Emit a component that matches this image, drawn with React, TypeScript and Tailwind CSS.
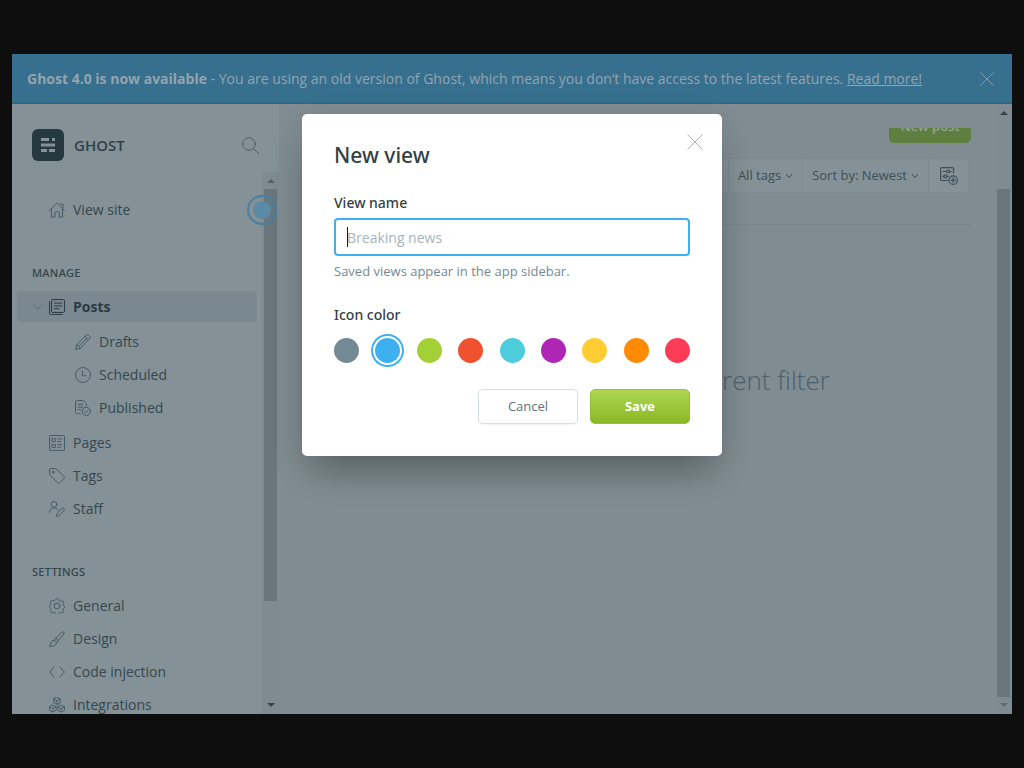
import { useState, type ReactNode } from "react";

function Icon({ children, className = "size-4" }: { children: ReactNode; className?: string }) {
  return (
    <svg
      viewBox="0 0 24 24"
      fill="none"
      stroke="currentColor"
      strokeWidth="1.5"
      strokeLinecap="round"
      strokeLinejoin="round"
      aria-hidden="true"
      className={`${className} shrink-0`}
    >
      {children}
    </svg>
  );
}

const cube = (x: number, y: number) =>
  `M${x} ${y - 5.2}l4.9 2.2v5.6l-4.9 2.6l-4.9-2.6v-5.6zM${x - 4.6} ${y - 2.6}l4.6 2.2l4.6-2.2M${x} ${y - 0.4}v5`;

const icons = {
  home: (
    <Icon>
      <path d="M.8 13 12 1.6 23.2 13M17 3.2h4v5.6M3.7 10.5v12.2h5v-6.2c0-1.2 1-2 2.2-2h2.2c1.2 0 2.2.8 2.2 2v6.2h5V10.5" />
    </Icon>
  ),
  posts: (
    <Icon>
      <rect x="3.8" y=".8" width="19.4" height="19.4" rx="1.5" />
      <path d="M.8 4v17.7c0 .8.7 1.5 1.5 1.5H20M8 6.2h11M8 10.4h11M8 14.6h7" />
    </Icon>
  ),
  pencil: (
    <Icon>
      <path d="M1 23l1.6-7L17.4 1.4c1.8-1.6 6.6 3.2 5 5L8 21.3zM2.6 16l5.4 5.3M15 3.8l5 5M17.6 6.4 5.3 18.7" />
    </Icon>
  ),
  clock: (
    <Icon>
      <circle cx="12" cy="12" r="11.2" />
      <path d="M11.2 6v7h5.2" />
    </Icon>
  ),
  published: (
    <Icon>
      <path d="M8 20.5H2.3A1.5 1.5 0 0 1 .8 19V2.3C.8 1.5 1.5.8 2.3.8h10.5l4.5 4.5v3M4.8 6.5h7M4.8 10.5h7M4.8 14.5h4" />
      <circle cx="17" cy="17" r="6.2" />
      <path d="m14.2 17.2 2 2 3.6-4" />
    </Icon>
  ),
  pages: (
    <Icon>
      <rect x=".8" y=".8" width="22.4" height="22.4" rx="1.2" />
      <path d="M5 5.5h4.5V10H5zM5 14.2h4.5v4.5H5zM13 5.8h6M13 9.8h4.5M13 14.5h6M13 18.5h4.5" />
    </Icon>
  ),
  tag: (
    <Icon>
      <path d="M.8 2.3v6.5c0 .7.2 1.2.7 1.7l11.800 12c.7.7 1.7.7 2.4 0l7-7c.7-.7.7-1.700 0-2.400l-11.500-11.600c-.5-.5-1-.7-1.700-.7H2.300C1.500.8.8 1.500.8 2.300z" />
      <circle cx="6.2" cy="6.2" r="1.5" />
    </Icon>
  ),
  staff: (
    <Icon>
      <circle cx="7.5" cy="5.2" r="4.4" />
      <path d="M.8 17.5v-.8c0-6 8.700-9.200 12.400-3.500M11 23.200l1.200-4.700 7.600-7.400c1.700-1.500 4.500 1.200 3 3l-7.500 7.700z" />
    </Icon>
  ),
  gear: (
    <Icon>
      <circle cx="12" cy="12" r="4.3" />
      <path d="M9.700 2.300c.9-2 3.700-2 4.600 0l.6 1.500c.4.900 1.300 1.400 2.300 1.100l1.500-.5c2-.8 4 1.200 3.200 3.200l-.6 1.600c-.3.900.2 1.900 1.100 2.200l-.1 0c1.300.6 1.300 3.600 0 4.200l-.3.100c-.9.400-1.300 1.300-1 2.200l.5 1.200c.8 2-1.200 4-3.200 3.200l-1.400-.6c-.9-.3-1.800.100-2.200 1l-.4.900c-.9 2-3.700 2-4.600 0l-.5-1.200c-.4-.9-1.300-1.300-2.200-1l-1.500.6c-2 .8-4-1.200-3.200-3.200l.6-1.500c.3-.9-.1-1.800-1-2.200l-.5-.2c-1.300-.6-1.300-3.500 0-4.100l.5-.2c.9-.4 1.300-1.300 1-2.200l-.6-1.500c-.8-2 1.200-4 3.200-3.200l1.500.6c.9.300 1.800-.100 2.200-1z" />
    </Icon>
  ),
  brush: (
    <Icon>
      <path d="M7.200 14.200 19.300 1.700c2-1.900 4.600.6 3 2.900L11.200 17.800M7.200 14.200c2.300.3 3.900 1.700 4 3.700.1 3.300-4.500 5.200-10.400 5 2-1.500 1.200-4.300 2.300-6.400.8-1.600 2.300-2.400 4.100-2.300zM10.300 11l3.800 3.300" />
    </Icon>
  ),
  code: (
    <Icon>
      <path d="M7.500 4.500.8 12l6.700 7.500M16.500 4.500l6.700 7.500-6.700 7.500" />
    </Icon>
  ),
  integrations: (
    <Icon>
      <path d={cube(12, 6)} />
      <path d={cube(5.8, 17.5)} />
      <path d={cube(18.2, 17.5)} />
    </Icon>
  ),
};

function NavRow({ icon, label, nested = false }: { icon: ReactNode; label: string; nested?: boolean }) {
  return (
    <a
      href="#"
      className={`flex h-[33px] shrink-0 items-center gap-2 text-sm text-[#36474f] ${nested ? "pl-[63px]" : "pl-[37px]"}`}
    >
      <span className="text-[#465c65]">{icon}</span>
      {label}
    </a>
  );
}

function SectionTitle({ children }: { children: ReactNode }) {
  return (
    <h2 className="mt-[39px] mb-[9px] shrink-0 pl-5 font-['Noto_Sans',sans-serif] text-[11px] leading-4 font-medium tracking-wide text-[#33454d]">
      {children}
    </h2>
  );
}

function Arrow({ up = false, className }: { up?: boolean; className: string }) {
  return (
    <svg viewBox="0 0 8 4" className={`h-1 w-2 shrink-0 ${className}`} aria-hidden="true">
      <path d={up ? "M0 4 4 0l4 4z" : "M0 0h8L4 4z"} fill="currentColor" />
    </svg>
  );
}

function Chevron() {
  return (
    <svg viewBox="0 0 8 6" className="h-1.5 w-2" fill="none" stroke="currentColor" aria-hidden="true">
      <path d="M1 1l3 3.5L7 1" />
    </svg>
  );
}

function Cross({ className }: { className: string }) {
  return (
    <svg viewBox="0 0 16 16" className={className} fill="none" stroke="currentColor" aria-hidden="true">
      <path d="M.5.5l15 15M15.5.5l-15 15" />
    </svg>
  );
}

function Banner() {
  return (
    <header className="flex h-[50px] shrink-0 items-center justify-between border-b border-[#28658c] bg-[#376f8f] pr-[18px] pl-[15px] text-sm text-[#94a4ac]">
      <p className="whitespace-nowrap">
        <strong className="font-bold">Ghost 4.0 is now available</strong> - You are using an old version of Ghost, which
        means you don’t have access to the latest features.{" "}
        <a href="#" className="underline">
          Read more!
        </a>
      </p>
      <button type="button" aria-label="Dismiss">
        <Cross className="size-3.5" />
      </button>
    </header>
  );
}

function Sidebar() {
  return (
    <aside className="flex w-[267px] shrink-0 flex-col bg-[#849196]">
      <div className="flex h-[68px] shrink-0 items-center gap-2.5 pt-3.5 pr-5 pl-5">
        <svg viewBox="0 0 32 32" className="size-8" aria-hidden="true">
          <rect width="32" height="32" rx="6" fill="#263840" />
          <path d="M9 9h8v3H9zM20 9h3v3h-3zM9 14.5h14v3H9zM9 20h6v3H9zM17 20h6v3h-6z" fill="#849196" />
        </svg>
        <span className="flex-1 text-[15px] leading-5 font-semibold text-[#2f424b]">GHOST</span>
        <button type="button" aria-label="Search" className="text-[#485d66]">
          <svg viewBox="0 0 17 17" className="size-[17px]" fill="none" stroke="currentColor" strokeLinecap="round">
            <circle cx="7" cy="7" r="6.3" />
            <path d="m11.5 11.5 5 5" />
          </svg>
        </button>
      </div>
      <div className="relative flex min-h-0 flex-1">
        <nav className="flex min-w-0 flex-1 flex-col overflow-hidden pt-[21px]">
          <NavRow icon={icons.home} label="View site" />
          <SectionTitle>MANAGE</SectionTitle>
          <a
            href="#"
            className="mx-[5px] my-px flex h-[31px] shrink-0 items-center rounded bg-[#7a8891] pl-4 text-sm font-bold text-[#2b3b43]"
          >
            <svg viewBox="0 0 10 6" className="mr-1.5 h-1.5 w-2.5 text-[#566a73]" fill="none" stroke="currentColor">
              <path d="M.5.5 5 5 9.5.5" />
            </svg>
            <span className="mr-2">{icons.posts}</span>
            Posts
          </a>
          <div className="my-0.5 shrink-0">
            <NavRow nested icon={icons.pencil} label="Drafts" />
            <NavRow nested icon={icons.clock} label="Scheduled" />
            <NavRow nested icon={icons.published} label="Published" />
          </div>
          <NavRow icon={icons.pages} label="Pages" />
          <NavRow icon={icons.tag} label="Tags" />
          <NavRow icon={icons.staff} label="Staff" />
          <SectionTitle>SETTINGS</SectionTitle>
          <NavRow icon={icons.gear} label="General" />
          <NavRow icon={icons.brush} label="Design" />
          <NavRow icon={icons.code} label="Code injection" />
          <NavRow icon={icons.integrations} label="Integrations" />
        </nav>
        <div className="flex w-[17px] flex-col items-center bg-[#7e8b90] py-[7px]">
          <Arrow up className="text-[#566368]" />
          <div className="mt-1.5 mb-auto h-[412px] w-[13px] bg-[#69777c]" />
          <Arrow className="text-[#34444c]" />
        </div>
        <span className="absolute top-[23px] right-0.5 flex size-[30px] items-center justify-center rounded-full border-2 border-[#4580a0]">
          <span className="size-[18px] rounded-full bg-[#5a8aa5]" />
        </span>
      </div>
    </aside>
  );
}

function Posts() {
  return (
    <main className="flex min-w-0 flex-1 bg-[#7f8c91]">
      <div className="mt-6 min-w-0 flex-1 overflow-hidden pr-6 pl-7">
        <div className="-mt-5 flex justify-end">
          <button
            type="button"
            className="h-[35px] w-[82px] rounded-[5px] bg-[#5f7f40] pt-0.5 text-[13px] font-semibold text-[#94a396]"
          >
            New post
          </button>
        </div>
        <div className="mt-[15px] mr-0.5 flex h-[35px] justify-end divide-x divide-[#7c898e] rounded border border-[#7c898e] bg-[#849196] text-[13px] text-[#3c4f58]">
          <span />
          <button type="button" className="flex items-center gap-1 px-[9px]">
            All tags <Chevron />
          </button>
          <button type="button" className="flex items-center gap-1 px-[9px]">
            Sort by: Newest <Chevron />
          </button>
          <button type="button" aria-label="Save view" className="flex w-[39px] items-center justify-center">
            <Icon className="size-[18px]">
              <path d="M10 18H2.3A1.5 1.5 0 0 1 .8 16.5V2.300C.8 1.500 1.500.8 2.300.8h14.200c.8 0 1.500.7 1.500 1.500V8M4 6h5M13 6h2M4 12.500h1M9 12.500h2" />
              <circle cx="11" cy="6" r="2" />
              <circle cx="7" cy="12.5" r="2" />
              <circle cx="17.5" cy="17.5" r="5.7" />
              <path d="M17.5 14.500v6M14.500 17.500h6" />
            </Icon>
          </button>
        </div>
        <div className="h-8 border-b border-[#77858b]" />
        <p className="mt-[137px] text-center text-[26px] leading-9 font-light whitespace-nowrap text-[#4c616b]">
          No posts match the current filter
        </p>
      </div>
      <div className="flex w-[17px] shrink-0 flex-col items-center bg-[#7e8b90] py-[7px]">
        <Arrow up className="text-[#34444c]" />
        <div className="mt-[74px] mb-1.5 w-[13px] flex-1 bg-[#69777c]" />
        <Arrow className="text-[#5e6c72]" />
      </div>
    </main>
  );
}

const colors = [
  { name: "midgrey", style: "bg-[#738a94]" },
  { name: "blue", style: "bg-[#3eb0ef]" },
  { name: "green", style: "bg-[#a4d037]" },
  { name: "red", style: "bg-[#f05230]" },
  { name: "teal", style: "bg-[#4dcddc]" },
  { name: "purple", style: "bg-[#ad26b4]" },
  { name: "yellow", style: "bg-[#ffcc33]" },
  { name: "orange", style: "bg-[#ff8b05]" },
  { name: "pink", style: "bg-[#fe3c57]" },
];

const labelStyle = "font-['Noto_Sans',sans-serif] text-sm leading-5 font-medium text-[#343f44]";

function NewViewDialog() {
  const [color, setColor] = useState("blue");
  const [name, setName] = useState("");
  return (
    <form
      role="dialog"
      aria-labelledby="dialog-title"
      className="w-[420px] rounded-[5px] bg-white pb-8 shadow-[0_22px_36px_-10px_rgba(0,0,0,0.3),0_6px_36px_rgba(0,0,0,0.06)]"
    >
      <div className="flex items-start justify-between pt-5 pr-[19px] pl-8">
        <h1
          id="dialog-title"
          className="mt-1.5 font-['Noto_Sans',sans-serif] text-[21px] leading-[30px] font-medium text-[#343f44]"
        >
          New view
        </h1>
        <button type="button" aria-label="Close" className="text-[#aeb2b4]">
          <Cross className="size-4" />
        </button>
      </div>
      <div className="px-8">
        <label htmlFor="view-name" className={`mt-[23px] block ${labelStyle}`}>
          View name
        </label>
        <div className="relative mt-[5px]">
          <input
            id="view-name"
            type="text"
            value={name}
            onChange={(e) => setName(e.target.value)}
            placeholder="Breaking news"
            className="block h-[38px] w-full rounded border-2 border-[#3eb0ef] px-[11px] text-sm text-[#15171a] caret-transparent outline-none placeholder:text-[#a6b4bb]"
          />
          <span className="absolute top-[9px] left-[13px] h-5 w-px bg-[#15171a]" />
        </div>
        <p className="mt-[5px] text-[13px] leading-5 text-[#738a94]">Saved views appear in the app sidebar.</p>
        <fieldset className="mt-6">
          <legend className={labelStyle}>Icon color</legend>
          <div className="mt-[13px] flex justify-between">
            {colors.map((c) => (
              <input
                key={c.name}
                type="radio"
                name="color"
                aria-label={c.name}
                checked={color === c.name}
                onChange={() => setColor(c.name)}
                className={`size-[25px] appearance-none rounded-full ${c.style} checked:ring-2 checked:ring-[#3eb0ef] checked:ring-offset-2 checked:ring-offset-white`}
              />
            ))}
          </div>
        </fieldset>
        <div className="mt-[26px] flex justify-end gap-3 text-[13px]">
          <button
            type="button"
            className="h-[35px] w-[100px] rounded-[5px] border border-[#d5e0e5] bg-white text-[#5f737c] shadow-[0_1px_2px_rgba(0,0,0,0.06)]"
          >
            Cancel
          </button>
          <button
            type="button"
            className="h-[35px] w-[100px] rounded-[5px] border border-[#95c02f] bg-linear-to-b from-[#afd752] to-[#8ab722] font-bold text-white"
          >
            Save
          </button>
        </div>
      </div>
    </form>
  );
}

export default function App() {
  return (
    <div className="flex h-screen flex-col bg-[#0e0e0e] px-3 py-[54px] font-['Open_Sans','Noto_Sans',sans-serif]">
      <div className="relative flex min-h-0 flex-1 flex-col overflow-hidden">
        <Banner />
        <div className="flex min-h-0 flex-1">
          <Sidebar />
          <Posts />
        </div>
        <div className="absolute inset-0 flex items-start justify-center pt-[60px]">
          <NewViewDialog />
        </div>
      </div>
    </div>
  );
}
